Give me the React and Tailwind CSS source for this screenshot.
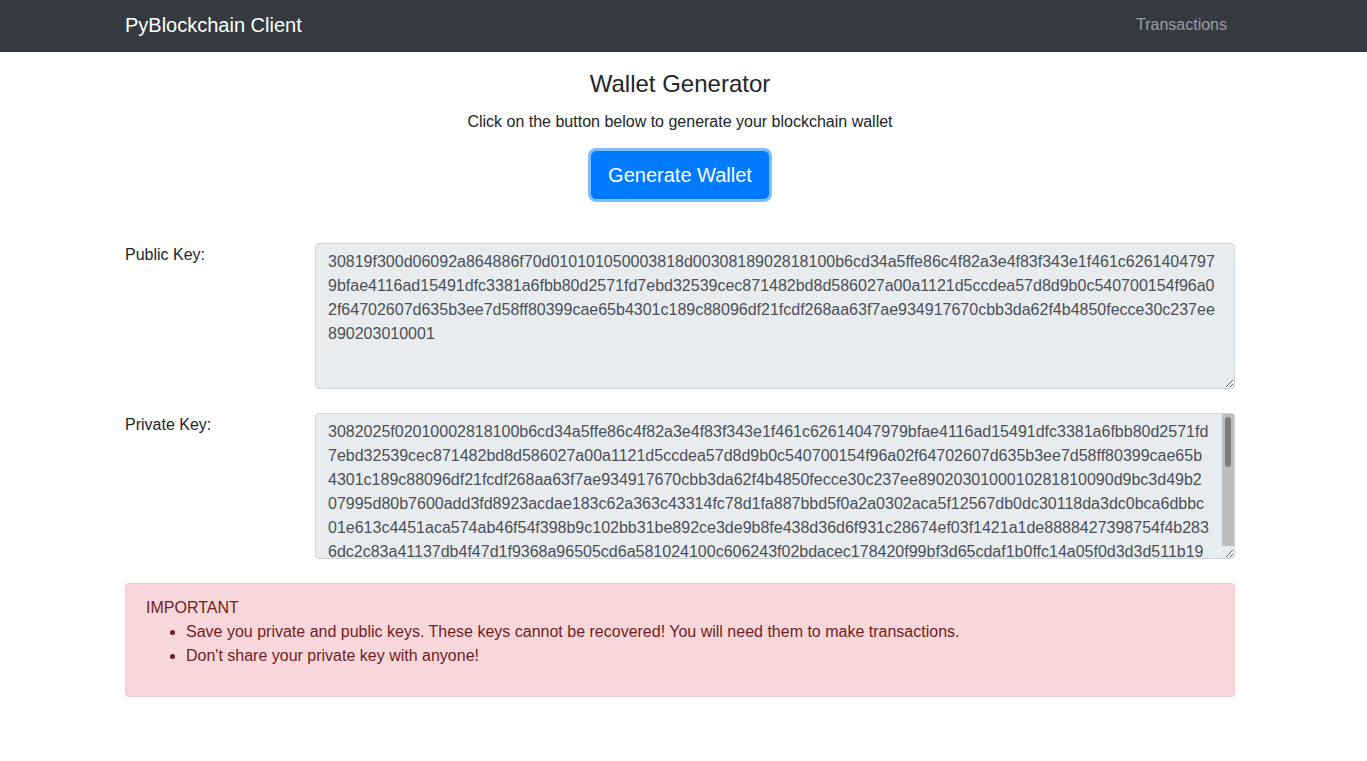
const publicKey =
  '30819f300d06092a864886f70d010101050003818d0030818902818100b6cd34a5ffe86c4f82a3e4f83f343e1f461c62614047979bfae4116ad15491dfc3381a6fbb80d2571fd7ebd32539cec871482bd8d586027a00a1121d5ccdea57d8d9b0c540700154f96a02f64702607d635b3ee7d58ff80399cae65b4301c189c88096df21fcdf268aa63f7ae934917670cbb3da62f4b4850fecce30c237ee890203010001';

const privateKey =
  '3082025f02010002818100b6cd34a5ffe86c4f82a3e4f83f343e1f461c62614047979bfae4116ad15491dfc3381a6fbb80d2571fd7ebd32539cec871482bd8d586027a00a1121d5ccdea57d8d9b0c540700154f96a02f64702607d635b3ee7d58ff80399cae65b4301c189c88096df21fcdf268aa63f7ae934917670cbb3da62f4b4850fecce30c237ee8902030100010281810090d9bc3d49b207995d80b7600add3fd8923acdae183c62a363c43314fc78d1fa887bbd5f0a2a0302aca5f12567db0dc30118da3dc0bca6dbbc01e613c4451aca574ab46f54f398b9c102bb31be892ce3de9b8fe438d36d6f931c28674ef03f1421a1de8888427398754f4b2836dc2c83a41137db4f47d1f9368a96505cd6a581024100c606243f02bdacec178420f99bf3d65cdaf1b0ffc14a05f0d3d3d511b19a4c7e1f05b2d8e4a6c90b3f1e7d25a8c4b6f0e3d9a1c7b52e8f4d06a3c9b1e7f2d5a8c04b6e3f9d1a7c2b5e8f0d4a6c3b9e1f7d2a5c8b0e4f6a3d9c1b7e5f2a8d0c4b6e3f9a1d7c5b2e8f0a4d6c3b9e1f7a2d5c8b0e4f6a3d9c1b7e5f2a8d0c4b6e3f9a1d7c5b2e8f0a4d6c3b9e1f7a2d5c8b0e4f6a3d9c1b7e5f2a8d0c4b6e3f9a1d7c5b2e8f0a4d6c3b9e1f7a2d5c8b0e4f6a3d9c1b7e5f2a8d0c4b6e3f9a1d7c5b2e8f0a4d6c3b9e1f7a2d5c8b0e4f6a3d9c1b7e5f2a8d0c4b6e3f9';

function Navbar() {
  return (
    <nav className="h-[52px] bg-[#343a40]">
      <div className="ml-[125px] flex h-full w-[1110px] items-center justify-between pb-[2px]">
        <span className="text-[20px] leading-[30px] text-white">PyBlockchain Client</span>
        <a href="#" className="px-2 text-[16px] leading-6 text-white/50">Transactions</a>
      </div>
    </nav>
  );
}

function KeyRow({ label, value, scroll }) {
  return (
    <div className="flex">
      <label className="w-[190px] shrink-0 text-[16px] leading-6 text-[#212529]">{label}</label>
      <div className="relative">
        <textarea
          readOnly
          value={value}
          className={`block h-[146px] w-[920px] overflow-hidden rounded-[4px] border border-[#ced4da] bg-[#e9ecef] py-[6px] pl-3 text-[16px] leading-6 text-[#495057] outline-none ${scroll ? 'pr-6' : 'pr-3'}`}
        />
        {/* scrollbar drawn over the field */}
        {scroll && (
          <div className="pointer-events-none absolute bottom-[13px] right-[1px] top-[1px] w-[12px] bg-[#bdbdbd]">
            <div className="mx-[3px] mt-[3px] h-[50px] rounded-full bg-[#7e7e7e]"></div>
          </div>
        )}
      </div>
    </div>
  );
}

export default function App() {
  return (
    <div className="min-h-screen bg-white font-['Liberation_Sans',Arial,sans-serif] text-[#212529]">
      <Navbar />

      <div className="ml-[125px] w-[1110px]">
        {/* Header */}
        <div className="flex flex-col items-center pt-[17px]">
          <h4 className="text-[24px] font-medium leading-[29px]">Wallet Generator</h4>
          <p className="mt-[12px] text-[16px] leading-6">Click on the button below to generate your blockchain wallet</p>
          <button className="mt-[17px] rounded-[5px] border border-[#007bff] bg-[#007bff] px-4 py-2 text-[20px] leading-[30px] text-white shadow-[0_0_0_3px_rgba(0,123,255,0.5)]">
            Generate Wallet
          </button>
        </div>

        {/* Keys */}
        <div className="mt-[44px] flex flex-col gap-6">
          <KeyRow label="Public Key:" value={publicKey} />
          <KeyRow label="Private Key:" value={privateKey} scroll />
        </div>

        {/* Warning */}
        <div className="mt-6 rounded-[4px] border border-[#f5c6cb] bg-[#f8d7da] px-5 pb-3 pt-3 text-[16px] leading-6 text-[#721c24]">
          <div>IMPORTANT</div>
          <ul className="mb-4 list-disc pl-10">
            <li>Save you private and public keys. These keys cannot be recovered! You will need them to make transactions.</li>
            <li>Don't share your private key with anyone!</li>
          </ul>
        </div>
      </div>
    </div>
  );
}
